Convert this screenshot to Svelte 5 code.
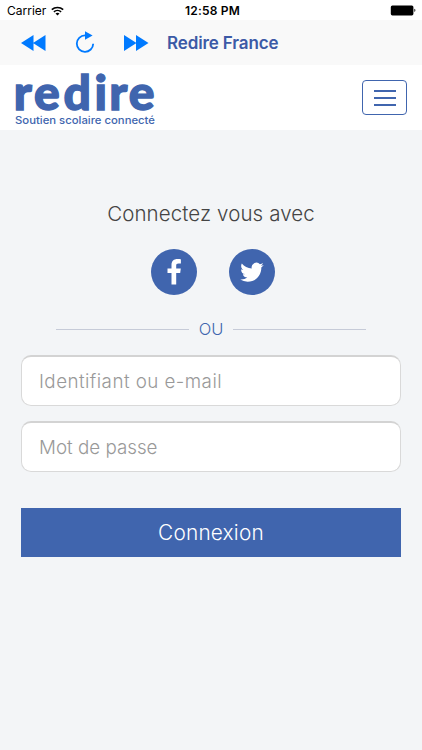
<script lang="ts">
	let login = $state('');
	let password = $state('');
	let menuOpen = $state(false);

	function submit(e: SubmitEvent) {
		e.preventDefault();
	}
</script>

<div class="screen">
	<div class="status-bar">
		<div class="carrier">
			<span>Carrier</span>
			<svg width="13" height="10" viewBox="0 0 13 10" fill="none" stroke="#000" stroke-width="1.6">
				<path d="M0.8 3.7a8.3 8.3 0 0 1 11.4 0" />
				<path d="M2.9 5.9a5.2 5.2 0 0 1 7.2 0" />
				<path d="M6.5 9.6 4.5 7.6a2.9 2.9 0 0 1 4 0z" fill="#000" stroke="none" />
			</svg>
		</div>
		<span class="time">12:58 PM</span>
		<svg class="battery" width="26" height="11" viewBox="0 0 26 11">
			<rect x="0.8" y="0.4" width="22.6" height="10" rx="1.6" />
			<path d="M24.4 3.8c1.3.3 1.3 2.9 0 3.2z" />
		</svg>
	</div>

	<nav class="toolbar">
		<button type="button" aria-label="Précédent">
			<svg width="25" height="16" viewBox="0 0 25 16" fill="#007aff">
				<path d="M12.5 0v16L0 8zM24.5 0v16L12 8z" />
			</svg>
		</button>
		<button type="button" class="reload" aria-label="Actualiser">
			<svg width="20" height="23" viewBox="0 0 20 23">
				<path d="M10.5 4.4H10a8.2 8.2 0 1 0 8.2 8.4" fill="none" stroke="#007aff" stroke-width="1.8" />
				<path d="M10 0.3 17.6 4.5 10 8.7z" fill="#007aff" />
			</svg>
		</button>
		<button type="button" aria-label="Suivant">
			<svg width="25" height="16" viewBox="0 0 25 16" fill="#007aff">
				<path d="M0 0v16l12.5-8zM12 0v16l12.5-8z" />
			</svg>
		</button>
		<span class="page-title">Redire France</span>
	</nav>

	<header>
		<svg class="logo" width="144" height="58" viewBox="0 0 144 58">
			<text class="brand" x="-0.2 20 49.5 80.5 95.2 114.8" y="40.8">redire</text>
			<text class="tagline" x="1" y="54.5" textLength="140" lengthAdjust="spacingAndGlyphs">Soutien scolaire connecté</text>
		</svg>
		<button
			type="button"
			class="menu-button"
			aria-label="Menu"
			aria-expanded={menuOpen}
			onclick={() => (menuOpen = !menuOpen)}
		>
			<span></span>
			<span></span>
			<span></span>
		</button>
	</header>

	<main>
		<h1>Connectez vous avec</h1>
		<div class="social">
			<button type="button" aria-label="Facebook">
				<svg width="46" height="46" viewBox="0 0 46 46" fill="#fff">
					<path d="M20.5 35.5V24H16.5V19.5H20.5V16c0-4 2.3-6 6-6 1.7 0 2.8.1 3.4.2v4.3h-2.4c-1.9 0-2.3.9-2.3 2.2v2.8h4.6l-.6 4.5h-4v11.5z" />
				</svg>
			</button>
			<button type="button" aria-label="Twitter">
				<svg width="46" height="46" viewBox="0 0 46 46">
					<path
						fill="#fff"
						transform="translate(11.2 11.4) scale(0.98)"
						d="M23.953 4.57a10 10 0 0 1-2.825.775 4.958 4.958 0 0 0 2.163-2.723 9.99 9.99 0 0 1-3.127 1.184 4.92 4.92 0 0 0-8.384 4.482C7.69 8.095 4.067 6.13 1.64 3.162a4.822 4.822 0 0 0-.666 2.475c0 1.71.87 3.213 2.188 4.096a4.904 4.904 0 0 1-2.228-.616v.06a4.923 4.923 0 0 0 3.946 4.827 4.996 4.996 0 0 1-2.212.085 4.936 4.936 0 0 0 4.604 3.417 9.867 9.867 0 0 1-6.102 2.105c-.39 0-.779-.023-1.17-.067a13.995 13.995 0 0 0 7.557 2.209c9.053 0 13.998-7.496 13.998-13.985 0-.21 0-.42-.015-.63A9.935 9.935 0 0 0 24 4.59z"
					/>
				</svg>
			</button>
		</div>
		<div class="divider"><span>OU</span></div>
		<form onsubmit={submit}>
			<input type="text" class="login" placeholder="Identifiant ou e-mail" bind:value={login} />
			<input type="password" placeholder="Mot de passe" bind:value={password} />
			<button type="submit">Connexion</button>
		</form>
	</main>
</div>

<style>
	:global(body) {
		margin: 0;
		background: #f3f5f7;
	}

	.screen {
		min-height: 750px;
		background: #f3f5f7;
		font-family: Inter, 'Liberation Sans', sans-serif;
	}

	button {
		padding: 0;
		border: 0;
		background: none;
		font-family: inherit;
		cursor: pointer;
	}

	svg {
		display: block;
	}

	.status-bar {
		display: grid;
		grid-template-columns: 1fr auto 1fr;
		align-items: center;
		box-sizing: border-box;
		height: 20px;
		padding: 1px 6px 0 7px;
		background: #fff;
		color: #000;
		font-size: 12px;
	}

	.carrier {
		display: flex;
		align-items: center;
		gap: 5px;
	}

	.time {
		margin-left: 2px;
		font-weight: 600;
		letter-spacing: 0.2px;
	}

	.battery {
		justify-self: end;
	}

	.toolbar {
		display: flex;
		align-items: center;
		box-sizing: border-box;
		height: 45px;
		padding: 0 21px;
		background: #f9f9f9;
	}

	.toolbar .reload {
		margin: 0 29px 0 29px;
	}

	.page-title {
		margin-left: 18px;
		color: #3c5aa6;
		font-size: 17px;
		font-weight: 600;
		letter-spacing: -0.12px;
	}

	header {
		display: flex;
		align-items: center;
		justify-content: space-between;
		box-sizing: border-box;
		height: 65px;
		padding: 0 15px 0 14px;
		background: #fff;
	}

	.logo {
		overflow: visible;
		fill: #4065ae;
	}

	.brand {
		font-family: Lato, sans-serif;
		font-size: 48px;
		font-weight: 900;
		stroke: #4065ae;
		stroke-width: 1.4px;
	}

	.tagline {
		font-size: 10.5px;
		font-weight: 500;
	}

	.menu-button {
		display: flex;
		flex-direction: column;
		align-items: center;
		justify-content: center;
		gap: 5px;
		box-sizing: border-box;
		width: 45px;
		height: 35px;
		border: 1px solid #4065ae;
		border-radius: 4px;
	}

	.menu-button span {
		width: 22px;
		height: 2px;
		background: #4065ae;
	}

	main {
		padding: 70px 21px 0;
	}

	h1 {
		margin: 0;
		color: #444;
		font-size: 20.5px;
		font-weight: 300;
		line-height: 28px;
		letter-spacing: 0.1px;
		text-align: center;
	}

	.social {
		display: flex;
		justify-content: center;
		gap: 32px;
		margin: 21px 0 23px 4px;
	}

	.social button {
		border-radius: 50%;
		background: #4065ae;
	}

	.divider {
		display: flex;
		align-items: center;
		gap: 10px;
		height: 22px;
		margin: 0 35px;
		color: #4065ae;
		font-size: 16.5px;
		font-weight: 300;
	}

	.divider::before,
	.divider::after {
		content: '';
		flex: 1;
		height: 1px;
		background: #c6cbd8;
	}

	form {
		display: flex;
		flex-direction: column;
		margin-top: 15px;
	}

	input {
		box-sizing: border-box;
		height: 51px;
		margin-bottom: 15px;
		padding: 1px 17px 0;
		border: 1px solid #d9d9d9;
		border-top: 2px solid #d3d3d3;
		border-radius: 10px;
		background: #fff;
		font-family: inherit;
		font-size: 18.8px;
		font-weight: 300;
	}

	.login {
		letter-spacing: 0.45px;
	}

	input::placeholder {
		color: #999;
		opacity: 1;
	}

	form button {
		height: 49px;
		margin-top: 21px;
		background: #4065ae;
		color: #fff;
		font-size: 20.8px;
		font-weight: 300;
		letter-spacing: 0.2px;
	}
</style>
